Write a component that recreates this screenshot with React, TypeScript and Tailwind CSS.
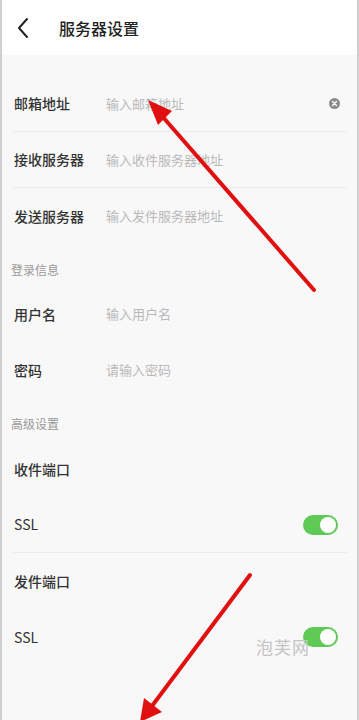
import React from "react";

const font = { fontFamily: '"Noto Sans CJK SC", "Noto Sans", sans-serif' };

function Row({ label, placeholder, clear, toggle, h = 56, latin }: { label: string; placeholder?: string; clear?: boolean; toggle?: boolean; h?: number; latin?: boolean }) {
  return (
    <div className={`${h === 55 ? "h-[55px]" : "h-[56px]"} flex items-center pl-[12px] pr-[14px]`}>
      <div className={`w-[92px] text-[14px] text-[#333] ${latin ? "font-normal" : "font-medium"}`}>{label}</div>
      {placeholder && <div className="flex-1 text-[13px] text-[#b8b8b8]">{placeholder}</div>}
      {!placeholder && <div className="flex-1" />}
      {clear && (
        <div className="w-[11px] h-[11px] rounded-full bg-[#8a8a8a] flex items-center justify-center mr-[3px]">
          <svg width="7" height="7" viewBox="0 0 7 7"><path d="M1.5 1.5L5.5 5.5M5.5 1.5L1.5 5.5" stroke="#fff" strokeWidth="1.2" strokeLinecap="round" /></svg>
        </div>
      )}
      {toggle && (
        <div className="w-[35px] h-[20px] rounded-full bg-[#5fc955] flex items-center justify-end px-[2px] mr-[5px]">
          <div className="w-[16px] h-[16px] rounded-full bg-white" />
        </div>
      )}
    </div>
  );
}

function Divider() {
  return <div className="mx-[10px] h-px bg-[#ececec]" />;
}

function Section({ title, extra }: { title: string; extra?: boolean }) {
  return (
    <div className={`pt-[18px] ${extra ? "pb-[9px]" : "pb-[8px]"} pl-[9px] text-[12px] leading-[16px] text-[#999]`}>{title}</div>
  );
}

export default function App() {
  return (
    <div className="relative w-[359px] h-[720px] overflow-hidden bg-[#f8f8f8] border-l-2 border-r-2 border-[#d0d0d0]" style={font}>
      <div className="h-[55px] bg-white flex items-center">
        <div className="w-[42px] flex justify-center">
          <svg width="14" height="22" viewBox="0 0 14 22"><path d="M11 2L3 11L11 20" fill="none" stroke="#222" strokeWidth="2" strokeLinecap="round" strokeLinejoin="round" /></svg>
        </div>
        <div className="ml-[15px] text-[16px] font-medium text-[#222]">服务器设置</div>
      </div>
      <div className="h-[21px]" />
      <Row label="邮箱地址" placeholder="输入邮箱地址" clear h={55} />
      <Divider />
      <Row label="接收服务器" placeholder="输入收件服务器地址" h={55} />
      <Divider />
      <Row label="发送服务器" placeholder="输入发件服务器地址" />
      <Section title="登录信息" />
      <Row label="用户名" placeholder="输入用户名" />
      <Row label="密码" placeholder="请输入密码" />
      <Section title="高级设置" extra />
      <Row label="收件端口" />
      <Row label="SSL" toggle h={55} latin />
      <Divider />
      <Row label="发件端口" />
      <Row label="SSL" toggle latin />

      <div className="absolute left-[254px] top-[634px] text-[17px] text-[#c4c4c4] tracking-[1px]">泡芙网</div>

      <svg className="absolute left-0 top-0 pointer-events-none" width="359" height="720" viewBox="0 0 359 720">
        <line x1="312" y1="290" x2="160" y2="116" stroke="#e01010" strokeWidth="4" strokeLinecap="round" />
        <polygon points="146,100 170,111 156,125" fill="#e01010" />
        <line x1="248" y1="575" x2="150" y2="706" stroke="#e01010" strokeWidth="4" strokeLinecap="round" />
        <polygon points="138,722 142,698 160,712" fill="#e01010" />
      </svg>
    </div>
  );
}
